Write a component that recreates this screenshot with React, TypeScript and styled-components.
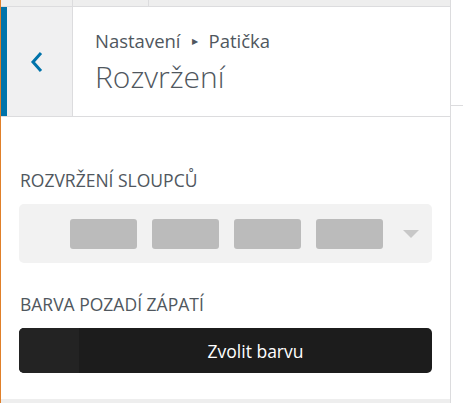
import React from "react";
import styled, { createGlobalStyle } from "styled-components";

const Global = createGlobalStyle`
  html, body { margin: 0; padding: 0; background: #fff; }
  body { font-family: "Open Sans", "Noto Sans", "Liberation Sans", sans-serif; }
  * { box-sizing: border-box; }
`;

const Page = styled.div`
  display: flex;
  width: 463px;
  height: 403px;
  overflow: hidden;
  background: #fff;
`;

const Panel = styled.div`
  width: 451px;
  height: 403px;
  display: flex;
  flex-direction: column;
  border-left: 1px solid #e0802a;
  border-right: 1px solid #dcdcde;
  background: #fff;
`;

const Gutter = styled.div`
  flex: 1;
  padding-top: 105px;
`;

const GutterLine = styled.div`
  height: 1px;
  background: #dcdcde;
`;

const TopBar = styled.div`
  display: flex;
  height: 7px;
  background: #eeeeee;
  border-bottom: 1px solid #dcdcde;
`;

const TopTab = styled.div<{ $w: number }>`
  width: ${(p) => p.$w}px;
  border-right: 1px solid #dcdcde;
`;

const Header = styled.div`
  display: flex;
  height: 110px;
  border-bottom: 1px solid #dcdcde;
`;

const BackButton = styled.button`
  width: 72px;
  height: 100%;
  margin: 0;
  padding: 0 6px 0 0;
  display: flex;
  align-items: center;
  justify-content: center;
  background: #f0f0f1;
  border: none;
  border-left: 6px solid #0073aa;
  border-right: 1px solid #dcdcde;
  color: #0073aa;
`;

const TitleBlock = styled.div`
  display: flex;
  flex-direction: column;
  padding: 23px 0 0 22px;
  gap: 7px;
`;

const Breadcrumb = styled.div`
  font-size: 18.5px;
  line-height: 22px;
  color: #50575e;
  display: flex;
  align-items: center;
  gap: 11px;
`;

const Arrow = styled.span`
  font-size: 8px;
  line-height: 22px;
`;

const Title = styled.div`
  font-size: 30px;
  font-weight: 300;
  line-height: 36px;
  color: #50575e;
`;

const Content = styled.div`
  flex: 1;
  display: flex;
  flex-direction: column;
  padding: 51px 18px 0 18px;
`;

const Label = styled.div<{ $mt?: number }>`
  font-size: 17.5px;
  line-height: 24px;
  color: #50575e;
  text-transform: uppercase;
  padding-left: 1px;
  margin-top: ${(p) => p.$mt ?? 0}px;
  margin-bottom: 12px;
`;

const Select = styled.div`
  height: 59px;
  background: #f2f2f2;
  border-radius: 5px;
  display: flex;
  align-items: center;
  padding: 0 13px 0 51px;
  gap: 15px;
`;

const Block = styled.div`
  width: 67px;
  height: 30px;
  background: #bbbbbb;
  border-radius: 3px;
`;

const Caret = styled.div`
  margin-left: auto;
  width: 0;
  height: 0;
  border-left: 8px solid transparent;
  border-right: 8px solid transparent;
  border-top: 8px solid #c8c8c8;
`;

const ColorButton = styled.button`
  display: flex;
  height: 45px;
  width: 100%;
  padding: 0;
  border: none;
  border-radius: 5px;
  overflow: hidden;
  background: #1c1c1c;
  font-family: inherit;
`;

const Swatch = styled.span`
  width: 60px;
  height: 100%;
  background: #232323;
`;

const ButtonText = styled.span`
  flex: 1;
  display: flex;
  align-items: center;
  justify-content: center;
  color: #fff;
  font-size: 17.5px;
`;

const BottomStrip = styled.div`
  height: 4px;
  background: #eeeeee;
`;

export default function App() {
  return (
    <>
      <Global />
      <Page>
        <Panel>
          <TopBar>
            <TopTab $w={72} />
            <TopTab $w={76} />
          </TopBar>
          <Header>
            <BackButton aria-label="Zpět">
              <svg width="14" height="22" viewBox="0 0 14 22">
                <polyline
                  points="11,2 3,11 11,20"
                  fill="none"
                  stroke="currentColor"
                  strokeWidth="3"
                />
              </svg>
            </BackButton>
            <TitleBlock>
              <Breadcrumb>
                <span>Nastavení</span>
                <Arrow>▶</Arrow>
                <span>Patička</span>
              </Breadcrumb>
              <Title>Rozvržení</Title>
            </TitleBlock>
          </Header>
          <Content>
            <Label>Rozvržení sloupců</Label>
            <Select>
              <Block />
              <Block />
              <Block />
              <Block />
              <Caret />
            </Select>
            <Label $mt={29}>Barva pozadí zápatí</Label>
            <ColorButton>
              <Swatch />
              <ButtonText>Zvolit barvu</ButtonText>
            </ColorButton>
          </Content>
          <BottomStrip />
        </Panel>
        <Gutter>
          <GutterLine />
        </Gutter>
      </Page>
    </>
  );
}
